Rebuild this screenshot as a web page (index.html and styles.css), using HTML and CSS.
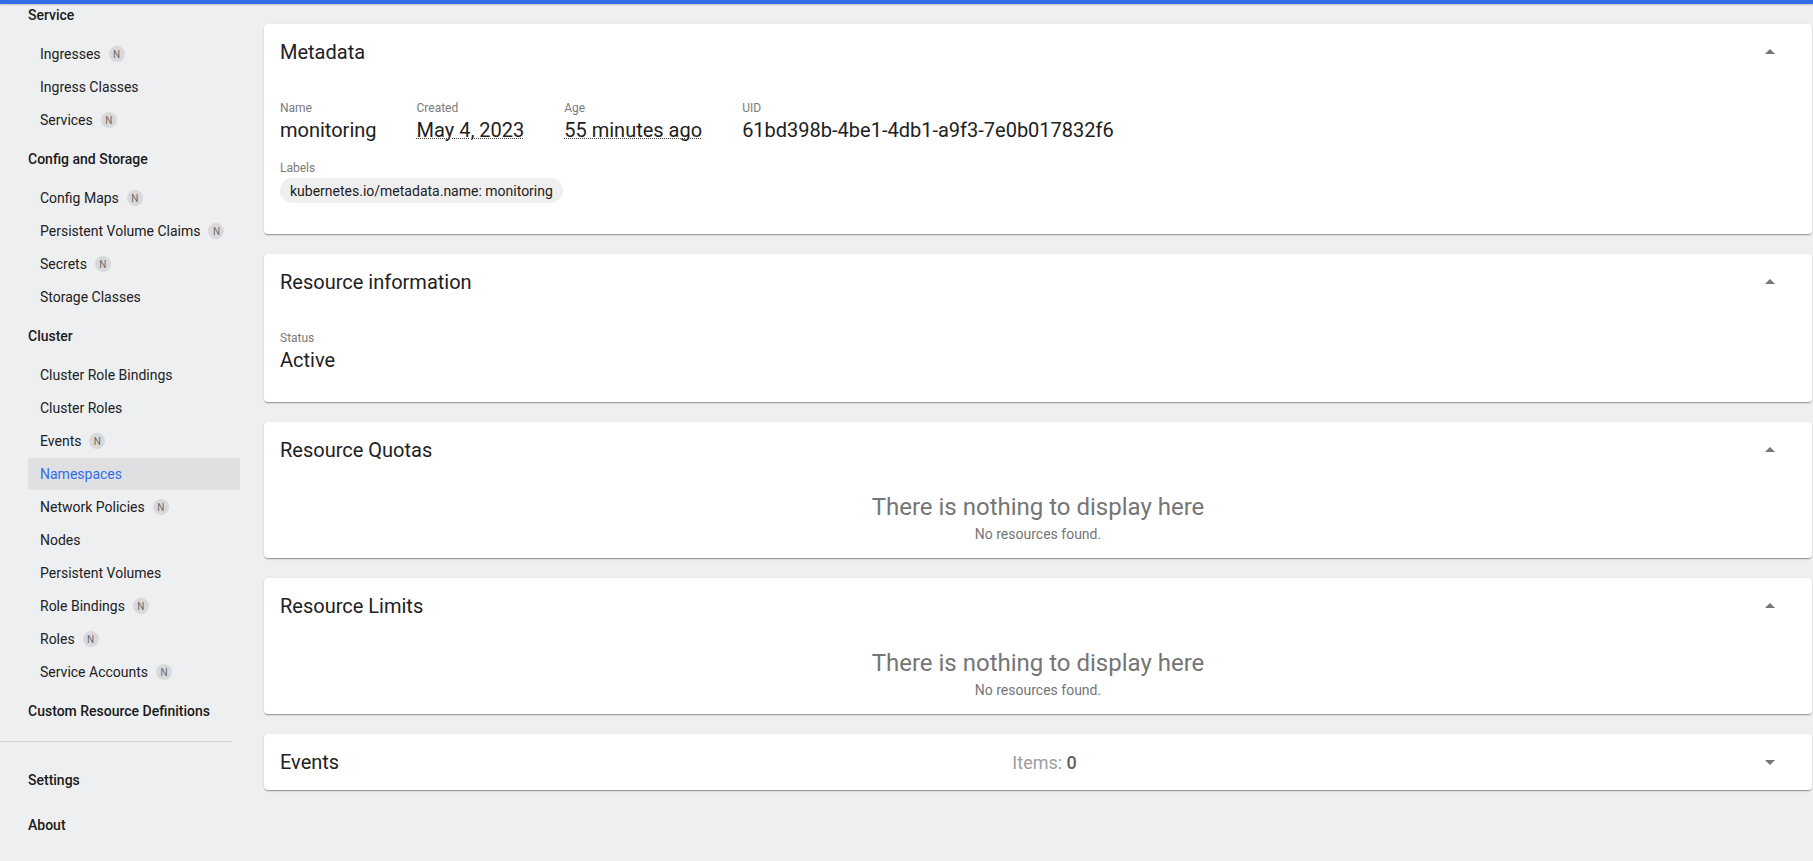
FILE: index.html
```html
<!DOCTYPE html>
<html lang="en">
<head>
<meta charset="utf-8">
<title>monitoring - Namespace</title>
<link rel="stylesheet" href="styles.css">
</head>
<body>
<div class="topbar"></div>
<div class="layout">
  <nav class="sidebar">
    <div class="nav-heading first">Service</div>
    <div class="nav-item">Ingresses <span class="badge">N</span></div>
    <div class="nav-item">Ingress Classes</div>
    <div class="nav-item">Services <span class="badge">N</span></div>
    <div class="nav-heading">Config and Storage</div>
    <div class="nav-item">Config Maps <span class="badge">N</span></div>
    <div class="nav-item">Persistent Volume Claims <span class="badge">N</span></div>
    <div class="nav-item">Secrets <span class="badge">N</span></div>
    <div class="nav-item">Storage Classes</div>
    <div class="nav-heading">Cluster</div>
    <div class="nav-item">Cluster Role Bindings</div>
    <div class="nav-item">Cluster Roles</div>
    <div class="nav-item">Events <span class="badge">N</span></div>
    <div class="nav-item active">Namespaces</div>
    <div class="nav-item">Network Policies <span class="badge">N</span></div>
    <div class="nav-item">Nodes</div>
    <div class="nav-item">Persistent Volumes</div>
    <div class="nav-item">Role Bindings <span class="badge">N</span></div>
    <div class="nav-item">Roles <span class="badge">N</span></div>
    <div class="nav-item">Service Accounts <span class="badge">N</span></div>
    <div class="nav-heading">Custom Resource Definitions</div>
    <div class="nav-divider"></div>
    <div class="nav-heading">Settings</div>
    <div class="nav-heading">About</div>
  </nav>

  <main class="main">
    <section class="card card-meta">
      <div class="card-header">
        <div class="card-title">Metadata</div>
        <div class="toggle"><svg viewBox="0 0 24 24" width="24" height="24"><path d="M7 14l5-5 5 5z"/></svg></div>
      </div>
      <div class="card-body">
        <div class="prop-row">
          <div class="prop">
            <div class="prop-label">Name</div>
            <div class="prop-value">monitoring</div>
          </div>
          <div class="prop">
            <div class="prop-label">Created</div>
            <div class="prop-value dotted">May 4, 2023</div>
          </div>
          <div class="prop">
            <div class="prop-label">Age</div>
            <div class="prop-value dotted">55 minutes ago</div>
          </div>
          <div class="prop">
            <div class="prop-label">UID</div>
            <div class="prop-value">61bd398b-4be1-4db1-a9f3-7e0b017832f6</div>
          </div>
        </div>
        <div class="prop labels">
          <div class="prop-label">Labels</div>
          <div class="chips"><span class="chip">kubernetes.io/metadata.name: monitoring</span></div>
        </div>
      </div>
    </section>

    <section class="card">
      <div class="card-header">
        <div class="card-title">Resource information</div>
        <div class="toggle"><svg viewBox="0 0 24 24" width="24" height="24"><path d="M7 14l5-5 5 5z"/></svg></div>
      </div>
      <div class="card-body">
        <div class="prop">
          <div class="prop-label">Status</div>
          <div class="prop-value">Active</div>
        </div>
      </div>
    </section>

    <section class="card">
      <div class="card-header">
        <div class="card-title">Resource Quotas</div>
        <div class="toggle"><svg viewBox="0 0 24 24" width="24" height="24"><path d="M7 14l5-5 5 5z"/></svg></div>
      </div>
      <div class="empty">
        <div class="empty-title">There is nothing to display here</div>
        <div class="empty-sub">No resources found.</div>
      </div>
    </section>

    <section class="card">
      <div class="card-header">
        <div class="card-title">Resource Limits</div>
        <div class="toggle"><svg viewBox="0 0 24 24" width="24" height="24"><path d="M7 14l5-5 5 5z"/></svg></div>
      </div>
      <div class="empty">
        <div class="empty-title">There is nothing to display here</div>
        <div class="empty-sub">No resources found.</div>
      </div>
    </section>

    <section class="card">
      <div class="card-header">
        <div class="card-title">Events</div>
        <div class="items">Items: <span class="items-count">0</span></div>
        <div class="toggle"><svg viewBox="0 0 24 24" width="24" height="24"><path d="M7 10l5 5 5-5z"/></svg></div>
      </div>
    </section>
  </main>
</div>
</body>
</html>
```

FILE: styles.css
```css
* { box-sizing: border-box; }

html, body {
  margin: 0;
  padding: 0;
  height: 100%;
  overflow: hidden;
}

body {
  background: #eeeff1;
  font-family: Roboto, "Liberation Sans", Arial, sans-serif;
  color: #212121;
}

.topbar {
  height: 4px;
  background: #326de6;
  box-shadow: 0 1px 2px rgba(0, 0, 0, 0.2);
  position: relative;
  z-index: 2;
}

.layout {
  display: flex;
  align-items: flex-start;
}

.sidebar {
  width: 240px;
  flex: none;
  margin-top: -12px;
  font-size: 14px;
}

.nav-heading {
  height: 45px;
  display: flex;
  align-items: center;
  padding-left: 28px;
  font-weight: 500;
  color: #1a1a1a;
}

.nav-item {
  height: 32px;
  margin: 1px 0 0 28px;
  padding-left: 12px;
  display: flex;
  align-items: center;
  color: #212121;
  border-radius: 2px;
}

.nav-item.active {
  background: #e0e0e2;
  color: #326de6;
}

.badge {
  display: inline-flex;
  align-items: center;
  justify-content: center;
  width: 16px;
  height: 16px;
  margin-left: 8px;
  border-radius: 50%;
  background: #d9d9db;
  color: #6b6b6b;
  font-size: 10px;
}

.nav-divider {
  width: 232px;
  height: 1px;
  background: #d3d3d5;
  margin: 8px 0 15px;
}

.main {
  flex: 1;
  min-width: 0;
  padding: 20px 1px 0 24px;
}

.card {
  background: #fff;
  border-radius: 4px;
  margin-bottom: 20px;
  box-shadow: 0 2px 1px -1px rgba(0, 0, 0, 0.2), 0 1px 1px 0 rgba(0, 0, 0, 0.14), 0 1px 3px 0 rgba(0, 0, 0, 0.12);
}

.card-header {
  height: 56px;
  display: flex;
  align-items: center;
  padding: 0 22px 0 16px;
}

.card-title {
  font-size: 20px;
  color: #212121;
}

.toggle {
  margin-left: auto;
  width: 40px;
  height: 40px;
  display: flex;
  align-items: center;
  justify-content: center;
  fill: #757575;
}

.items {
  margin-left: auto;
  font-size: 18px;
  color: #9e9e9e;
}

.items-count {
  color: #616161;
  font-weight: 500;
}

.card-body {
  padding: 20px 16px 28px;
}

.prop-row {
  display: flex;
  gap: 40px;
}

.prop-label {
  font-size: 12px;
  line-height: 16px;
  color: #7a7a7a;
}

.prop-value {
  font-size: 20px;
  line-height: 28px;
  color: #212121;
}

.prop-value.dotted {
  text-decoration: underline dotted #444;
  text-decoration-thickness: 1px;
}

.labels {
  margin-top: 16px;
  margin-bottom: 3px;
}

.chips {
  margin-top: 2px;
  display: flex;
}

.chip {
  display: inline-flex;
  align-items: center;
  height: 25px;
  padding: 0 10px;
  border-radius: 13px;
  background: #efefef;
  font-size: 14px;
  color: #212121;
}

.empty {
  padding: 15px 16px 14px;
  text-align: center;
  color: #757575;
}

.empty-title {
  font-size: 24px;
  line-height: 28px;
}

.empty-sub {
  margin-top: 3px;
  font-size: 14px;
  line-height: 20px;
}
```
